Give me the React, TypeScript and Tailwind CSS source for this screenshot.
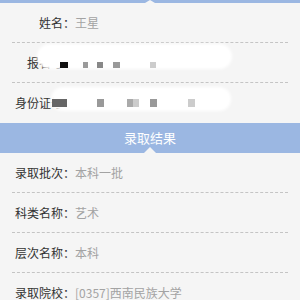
const font = { fontFamily: '"Noto Sans CJK SC", "Noto Sans", sans-serif' };

function Notch() {
  return (
    <div className="absolute bottom-0 left-[144px] h-0 w-0 border-x-[6px] border-b-[6px] border-x-transparent border-b-[#f5f5f5]" />
  );
}

function Row({
  label,
  value,
  line = true,
  children,
}: {
  label: string;
  value?: string;
  line?: boolean;
  children?: React.ReactNode;
}) {
  return (
    <div className="relative px-3">
      <div
        className={`relative flex h-10 items-center text-[12px] ${
          line ? 'border-b border-dashed border-[#c4c4c4]' : ''
        }`}
      >
        <span className="w-[63px] shrink-0 text-right text-[#333]">{label}</span>
        <span className="text-[#a3a3a3]">{value}</span>
        {children}
      </div>
    </div>
  );
}

// blurred redaction over personal data
function Smudge({
  left,
  top,
  width,
  height,
  sqTop,
  sqH,
  squares,
}: {
  left: number;
  top: number;
  width: number;
  height: number;
  sqTop: number;
  sqH: number;
  squares: [number, number, string][];
}) {
  return (
    <>
      <div
        className="absolute rounded-full bg-white blur-[1.5px]"
        style={{ left, top, width, height }}
      />
      {squares.map(([x, w, c], i) => (
        <div
          key={i}
          className="absolute"
          style={{ left: x, top: sqTop, width: w, height: sqH, background: c }}
        />
      ))}
    </>
  );
}

export default function App() {
  return (
    <div className="h-[300px] w-[300px] overflow-hidden bg-[#f5f5f5]" style={font}>
      <div className="relative h-[3px] bg-[#9bb7e2]">
        <div className="absolute bottom-0 left-[145px] h-0 w-0 border-x-[5px] border-b-[3px] border-x-transparent border-b-[#f5f5f5]" />
      </div>
      <Row label="姓名：" value="王星" />
      <Row label="报名号：" value="">
        <Smudge
          left={25}
          top={1}
          width={195}
          height={25}
          sqTop={19}
          sqH={6}
          squares={[
            [48, 8, '#111'],
            [71, 5, '#9a9a9a'],
            [85, 6, '#888'],
            [101, 7, '#999'],
            [138, 6, '#ccc'],
          ]}
        />
      </Row>
      <Row label="身份证号：" value="" line={false}>
        <Smudge
          left={39}
          top={4}
          width={180}
          height={24}
          sqTop={16}
          sqH={8}
          squares={[
            [40, 15, '#666'],
            [85, 7, '#999'],
            [115, 6, '#aaa'],
            [121, 6, '#ccc'],
            [138, 7, '#999'],
            [176, 7, '#ccc'],
          ]}
        />
      </Row>
      <div className="relative flex h-[30px] items-center justify-center bg-[#9bb7e2] text-[13px] text-white">
        录取结果
        <Notch />
      </div>
      <Row label="录取批次：" value="本科一批" />
      <Row label="科类名称：" value="艺术" />
      <Row label="层次名称：" value="本科" />
      <Row label="录取院校：" value="[0357]西南民族大学" line={false} />
    </div>
  );
}
